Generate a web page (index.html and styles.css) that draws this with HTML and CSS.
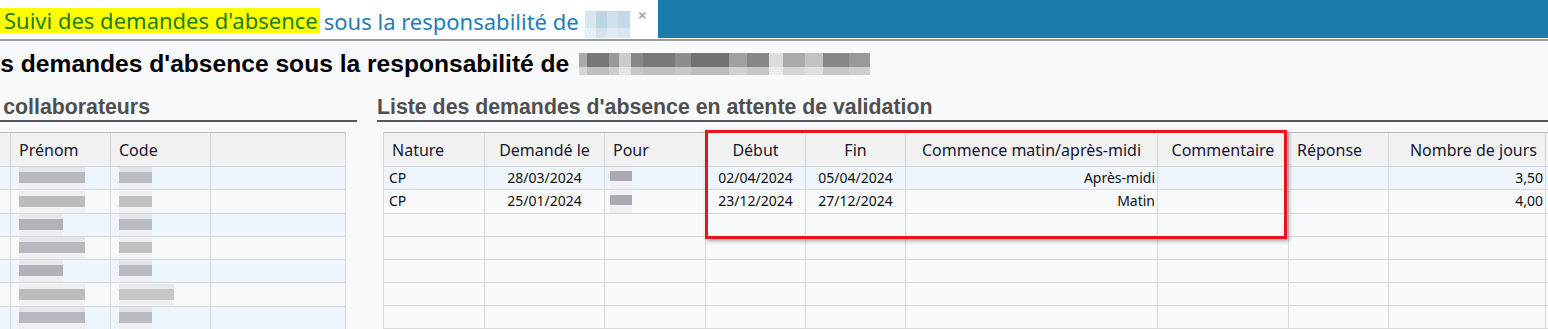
FILE: index.html
```html
<!DOCTYPE html>
<html lang="fr">
<head>
<meta charset="utf-8">
<title>Suivi des demandes d'absence</title>
<link rel="stylesheet" href="styles.css">
</head>
<body>
<header class="tabbar">
  <div class="tab">
    <span class="hl">Suivi des demandes d'absence</span>
    <span class="tab-rest">sous la responsabilité de</span>
    <span class="blur blur-tab"></span>
    <span class="close">×</span>
  </div>
  <div class="tabfill"></div>
</header>
<main class="page">
  <h1 class="title">Suivi des demandes d'absence sous la responsabilité de <span class="blur blur-title"></span></h1>
  <div class="panels">
    <section class="panel panel-left">
      <h2 class="heading">Liste des collaborateurs</h2>
      <table class="grid grid-left">
        <colgroup><col class="c-nom"><col class="c100"><col class="c100"><col class="c-rest"></colgroup>
        <thead><tr><th>Nom</th><th>Prénom</th><th>Code</th><th></th></tr></thead>
        <tbody>
          <tr class="alt"><td></td><td><span class="blur b-name1"></span></td><td><span class="blur b-code1"></span></td><td></td></tr>
          <tr><td></td><td><span class="blur b-name2"></span></td><td><span class="blur b-code2"></span></td><td></td></tr>
          <tr class="alt"><td></td><td><span class="blur b-name3"></span></td><td><span class="blur b-code1"></span></td><td></td></tr>
          <tr><td></td><td><span class="blur b-name1"></span></td><td><span class="blur b-code2"></span></td><td></td></tr>
          <tr class="alt"><td></td><td><span class="blur b-name3"></span></td><td><span class="blur b-code1"></span></td><td></td></tr>
          <tr><td></td><td><span class="blur b-name2"></span></td><td><span class="blur b-code3"></span></td><td></td></tr>
          <tr class="alt"><td></td><td><span class="blur b-name1"></span></td><td><span class="blur b-code1"></span></td><td></td></tr>
          <tr><td></td><td></td><td></td><td></td></tr>
        </tbody>
      </table>
    </section>
    <section class="panel panel-right">
      <h2 class="heading">Liste des demandes d'absence en attente de validation</h2>
      <div class="table-wrap">
        <table class="grid grid-right">
          <colgroup>
            <col class="c101"><col class="c120"><col class="c101"><col class="c100"><col class="c100">
            <col class="c252"><col class="c131"><col class="c100"><col class="c157"><col class="c100">
          </colgroup>
          <thead>
            <tr>
              <th class="l">Nature</th><th>Demandé le</th><th class="l">Pour</th><th>Début</th><th>Fin</th>
              <th>Commence matin/après-midi</th><th>Commentaire</th><th class="l">Réponse</th><th class="r">Nombre de jours</th><th></th>
            </tr>
          </thead>
          <tbody>
            <tr class="alt"><td class="l">CP</td><td>28/03/2024</td><td class="l"><span class="blur b-pour"></span></td><td>02/04/2024</td><td>05/04/2024</td><td class="r">Après-midi</td><td></td><td></td><td class="r">3,50</td><td></td></tr>
            <tr><td class="l">CP</td><td>25/01/2024</td><td class="l"><span class="blur b-pour"></span></td><td>23/12/2024</td><td>27/12/2024</td><td class="r">Matin</td><td></td><td></td><td class="r">4,00</td><td></td></tr>
            <tr><td></td><td></td><td></td><td></td><td></td><td></td><td></td><td></td><td></td><td></td></tr>
            <tr><td></td><td></td><td></td><td></td><td></td><td></td><td></td><td></td><td></td><td></td></tr>
            <tr><td></td><td></td><td></td><td></td><td></td><td></td><td></td><td></td><td></td><td></td></tr>
            <tr><td></td><td></td><td></td><td></td><td></td><td></td><td></td><td></td><td></td><td></td></tr>
            <tr><td></td><td></td><td></td><td></td><td></td><td></td><td></td><td></td><td></td><td></td></tr>
            <tr><td></td><td></td><td></td><td></td><td></td><td></td><td></td><td></td><td></td><td></td></tr>
          </tbody>
        </table>
        <div class="highlight-box"></div>
      </div>
    </section>
  </div>
</main>
</body>
</html>
```

FILE: styles.css
```css
* { box-sizing: border-box; }
html, body { margin: 0; padding: 0; }
body {
  width: 1548px;
  height: 329px;
  overflow: hidden;
  background: #f8f9fb;
  font-family: "Noto Sans", "Open Sans", sans-serif;
  color: #1a1a1a;
}

/* ---------- tab bar ---------- */
.tabbar {
  display: flex;
  height: 41px;
  background: #ffffff;
  border-bottom: 2px solid #9c9c9c;
}
.tab {
  width: 658px;
  height: 38px;
  display: flex;
  align-items: center;
  gap: 4px;
  font-size: 22px;
  white-space: nowrap;
  overflow: hidden;
}
.hl {
  background: #ffff00;
  color: #1d7f12;
  padding: 0 2px 0 4px;
  line-height: 25px;
  margin-top: 3px;
}
.tab-rest { color: #1f7db4; margin-top: 3px; }
.close {
  color: #a9a9a9;
  font-weight: bold;
  font-size: 16px;
  margin-left: 4px;
  margin-top: -8px;
}
.tabfill {
  flex: 1;
  height: 38px;
  background: #1a7aab;
}

/* ---------- blurred (anonymised) blocks ---------- */
.blur { display: inline-block; vertical-align: middle; }
.blur-tab {
  width: 45px;
  height: 27px;
  margin-top: 10px;
  margin-left: 2px;
  background:
    linear-gradient(180deg, rgba(255,255,255,0) 0 17px, rgba(255,255,255,.35) 17px 27px),
    linear-gradient(90deg, #d7e6ef 0 11px, #bcd4e3 11px 22px, #cfe1ec 22px 33px, #c4dae7 33px 45px);
}
.blur-title {
  width: 291px;
  height: 22px;
  background:
    linear-gradient(180deg, rgba(255,255,255,0) 0 14px, rgba(248,249,251,.55) 14px 22px),
    linear-gradient(90deg, #aaa 0 8px, #777 8px 30px, #999 30px 40px, #ccc 40px 52px, #888 52px 64px, #7a7a7a 64px 96px, #8d8d8d 96px 112px, #727272 112px 150px, #a0a0a0 150px 168px, #888 168px 190px, #ddd 190px 204px, #aaa 204px 226px, #c2c2c2 226px 244px, #888 244px 270px, #999 270px 291px);
}
.b-name1, .b-name2, .b-name3, .b-code1, .b-code2, .b-code3, .b-pour { height: 22px; }
.b-name1 { width: 66px; background: linear-gradient(180deg, #e4e6ea 0 5px, #b6b9be 5px 16px, #eeeff2 16px 22px); }
.b-name2 { width: 66px; background: linear-gradient(180deg, #eeeff1 0 5px, #bcbcbe 5px 16px, #f1f2f4 16px 22px); }
.b-name3 { width: 44px; background: linear-gradient(180deg, #e7e8ea 0 5px, #b0b3b8 5px 16px, #eceef1 16px 22px); }
.b-code1 { width: 33px; background: linear-gradient(180deg, #e3e5e8 0 5px, #b9bcc0 5px 16px, #eeeff2 16px 22px); }
.b-code2 { width: 33px; background: linear-gradient(180deg, #eeeff1 0 5px, #c0c0c1 5px 16px, #f0f1f3 16px 22px); }
.b-code3 { width: 55px; background: linear-gradient(180deg, #e8e9ec 0 5px, #c4c6c8 5px 16px, #eef0f3 16px 22px); }
.b-pour { width: 22px; background: linear-gradient(180deg, #eef0f3 0 4px, #a9abb1 4px 14px, #eef0f3 14px 22px); }

/* ---------- page ---------- */
.page { padding-top: 8px; }
.title {
  margin: 0 0 0 -94px;
  font-family: "Liberation Sans", Arial, sans-serif;
  font-weight: bold;
  font-size: 24.6px;
  line-height: 30px;
  color: #000;
  white-space: nowrap;
  display: flex;
  align-items: center;
  gap: 10px;
}
.panels {
  display: flex;
  gap: 20px;
  margin-top: 15px;
}
.panel { flex: none; }
.panel-left { width: 452px; margin-left: -95px; }
.panel-right { width: 1250px; }
.heading {
  margin: 0;
  font-family: "Liberation Sans", Arial, sans-serif;
  font-weight: bold;
  font-size: 21.3px;
  line-height: 26px;
  color: #4f4f4f;
  border-bottom: 2px solid #55595e;
  white-space: nowrap;
}
.panel-left .grid { margin: 10px 12px 0 6px; width: 434px; }
.table-wrap { position: relative; margin: 10px 0 0 6px; }

/* ---------- grids ---------- */
.grid {
  border-collapse: collapse;
  table-layout: fixed;
  border: 1px solid #b9b9b9;
  border-right-color: #a8a8a8;
  font-size: 14px;
}
.grid-right { width: 1262px; }
.c-nom { width: 99px; }
.c100 { width: 100px; }
.c-rest { width: 135px; }
.c101 { width: 101px; }
.c120 { width: 120px; }
.c252 { width: 252px; }
.c131 { width: 131px; }
.c157 { width: 157px; }

.grid th {
  height: 34px;
  background: #f2f2f2;
  font-weight: normal;
  font-size: 16px;
  color: #161630;
  text-align: center;
  padding: 0 8px;
  border: 1px solid #d6d6d6;
  border-top: none;
  white-space: nowrap;
  overflow: hidden;
}
.grid-left th { text-align: left; }
.grid th.l { text-align: left; }
.grid th.r { text-align: right; }
.grid td {
  height: 23px;
  padding: 0 3px;
  border: 1px solid #d9d9d9;
  text-align: center;
  white-space: nowrap;
  overflow: hidden;
  color: #111;
  line-height: 20px;
}
.grid td.l { text-align: left; padding-left: 5px; }
.grid td.r { text-align: right; padding-right: 2px; }
.grid-left td { text-align: left; padding-left: 8px; }
.grid tr.alt td { background: #eef5fd; }

.highlight-box {
  position: absolute;
  left: 322px;
  top: -2px;
  width: 582px;
  height: 109px;
  border: 3px solid #e8141c;
  box-shadow: 2px 2px 4px rgba(0, 0, 0, 0.35);
  pointer-events: none;
}
```
